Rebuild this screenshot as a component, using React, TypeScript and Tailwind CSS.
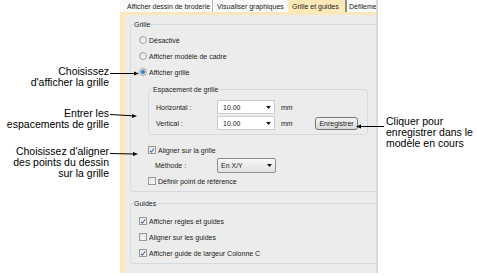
import React from "react";

const Radio = ({ checked }: { checked?: boolean }) => (
  <span className="w-[8px] h-[8px] shrink-0 rounded-full border border-[#a3a3a3] bg-gradient-to-br from-[#dcdcdc] to-[#fbfbfb] flex items-center justify-center">
    {checked && <span className="w-[4px] h-[4px] rounded-full bg-[#2f7fd0] shadow-[0_0_1px_#7fb6ea]" />}
  </span>
);

const Check = ({ checked }: { checked?: boolean }) => (
  <span className="w-[8px] h-[8px] shrink-0 border border-[#9a9a9a] bg-gradient-to-br from-[#e2e2e2] to-[#fcfcfc] flex items-center justify-center">
    {checked && (
      <svg width="7" height="7" viewBox="0 0 7 7">
        <path d="M1 3.8 L2.7 5.5 L6 1.2" fill="none" stroke="#3f5d9c" strokeWidth="1.2" />
      </svg>
    )}
  </span>
);

const DownArrow = () => (
  <svg width="5" height="3" viewBox="0 0 5 3">
    <path d="M0 0 H5 L2.5 3 Z" fill="#111" />
  </svg>
);

const Row = ({ children, h = "h-[16px]" }: { children: React.ReactNode; h?: string }) => (
  <div className={`${h} flex items-center gap-[2px]`}>{children}</div>
);

export default function App() {
  return (
    <div className="relative w-[477px] h-[276px] bg-white overflow-hidden font-['Liberation_Sans',Arial,sans-serif]">
      {/* Window */}
      <div className="ml-[120px] w-[258px] h-[273px] flex flex-col text-[7px] leading-[9px] text-[#222] border-r-2 border-[#dadada]">
        {/* Tabs */}
        <div className="h-[12px] flex bg-[#fafafa] shrink-0">
          <div className="w-[93px] flex items-center pl-[7px] border-r border-[#b5b5b5]">Afficher dessin de broderie</div>
          <div className="w-[75px] flex items-center pl-[3px] border-l border-white">Visualiser graphiques</div>
          <div className="w-[57px] flex items-center pl-[4px] bg-[#fde8b8]">Grille et guides</div>
          <div className="w-[2px] bg-[#8a8a8a]" />
          <div className="flex-1 flex items-center pl-[2px] overflow-hidden whitespace-nowrap">Défileme</div>
        </div>
        {/* Body */}
        <div className="flex-1 bg-[#ececec] border-l-[5px] border-t-[3px] border-[#fce8bb] overflow-hidden pl-[5px]">
          {/* Grille */}
          <fieldset className="mt-[5px] w-[262px] border border-[#d0dbe3] rounded-[3px] px-[2px] pb-[2px]">
            <legend className="px-[1px] leading-[9px]">Grille</legend>
            <div className="pl-[6px] pt-[3px]">
              <Row><Radio /><span>Désactivé</span></Row>
              <Row><Radio /><span>Afficher modèle de cadre</span></Row>
              <Row><Radio checked /><span>Afficher grille</span></Row>
              <fieldset className="mt-[5px] ml-[9px] w-[220px] border border-[#d0dbe3] rounded-[3px] px-[3px] pb-[4px]">
                <legend className="px-[1px] leading-[9px]">Espacement de grille</legend>
                <div className="pl-[4px] pt-[6px] flex flex-col gap-[2px]">
                  <div className="h-[14px] flex items-center">
                    <span className="w-[61px]">Horizontal :</span>
                    <div className="w-[58px] h-[14px] bg-white border border-[#cdcdcd] flex items-center justify-between pl-[5px] pr-[3px]">
                      <span>10.00</span>
                      <DownArrow />
                    </div>
                    <span className="ml-[6px]">mm</span>
                  </div>
                  <div className="h-[14px] flex items-center">
                    <span className="w-[61px]">Vertical :</span>
                    <div className="w-[58px] h-[14px] bg-white border border-[#cdcdcd] flex items-center justify-between pl-[5px] pr-[3px]">
                      <span>10.00</span>
                      <DownArrow />
                    </div>
                    <span className="ml-[6px] w-[34px]">mm</span>
                    <div className="w-[43px] h-[13px] border border-[#777] rounded-[3px] bg-gradient-to-b from-[#f4f4f4] to-[#d9d9d9] flex items-center justify-center">
                      Enregistrer
                    </div>
                  </div>
                </div>
              </fieldset>
              <div className="mt-[7px] ml-[9px]">
                <Row><Check checked /><span>Aligner sur la grille</span></Row>
              </div>
              <div className="h-[15px] flex items-center ml-[16px]">
                <span className="w-[62px]">Méthode :</span>
                <div className="w-[59px] h-[15px] border border-[#8f8f8f] rounded-[2px] bg-gradient-to-b from-[#f7f7f7] to-[#e2e2e2] flex items-center justify-between pl-[3px] pr-[3px]">
                  <span>En X/Y</span>
                  <DownArrow />
                </div>
              </div>
              <div className="ml-[9px]">
                <Row><Check /><span>Définir point de référence</span></Row>
              </div>
            </div>
          </fieldset>
          {/* Guides */}
          <fieldset className="mt-[7px] w-[262px] border border-[#d0dbe3] rounded-[3px] px-[2px] pb-[2px]">
            <legend className="px-[1px] leading-[9px]">Guides</legend>
            <div className="pl-[6px] pt-[5px]">
              <Row><Check checked /><span>Afficher règles et guides</span></Row>
              <Row><Check /><span>Aligner sur les guides</span></Row>
              <Row><Check checked /><span>Afficher guide de largeur Colonne C</span></Row>
            </div>
          </fieldset>
        </div>
      </div>

      {/* Callout texts */}
      <div className="absolute left-0 top-[66px] w-[109px] text-right text-[10.5px] leading-[11px] text-black">
        <div>Choisissez</div>
        <div>d'afficher la grille</div>
      </div>
      <div className="absolute left-0 top-[108px] w-[109px] text-right text-[10.5px] leading-[11px] text-black">
        <div>Entrer les</div>
        <div>espacements de grille</div>
      </div>
      <div className="absolute left-0 top-[146px] w-[109px] text-right text-[10.5px] leading-[11px] text-black">
        <div>Choisissez d'aligner</div>
        <div>des points du dessin</div>
        <div>sur la grille</div>
      </div>
      <div className="absolute left-[386px] top-[116px] text-[10.5px] leading-[11px] text-black whitespace-nowrap">
        <div>Cliquer pour</div>
        <div>enregistrer dans le</div>
        <div>modèle en cours</div>
      </div>

      {/* Callout lines */}
      <svg className="absolute inset-0 pointer-events-none" width="477" height="276" viewBox="0 0 477 276">
        <g stroke="#000" strokeWidth="1" fill="none">
          <path d="M110 73.5 H135" />
          <path d="M110 114.5 L133 115.8" />
          <path d="M110 153.5 L134 154" />
          <path d="M384 126.5 H360" />
        </g>
        <g fill="#000">
          <path d="M139 73.5 L134 71.5 L134 75.5 Z" />
          <path d="M137 116 L132 114 L132 118 Z" />
          <path d="M138 154 L133 152 L133 156 Z" />
          <path d="M356 126.5 L361 124.5 L361 128.5 Z" />
        </g>
      </svg>
    </div>
  );
}
